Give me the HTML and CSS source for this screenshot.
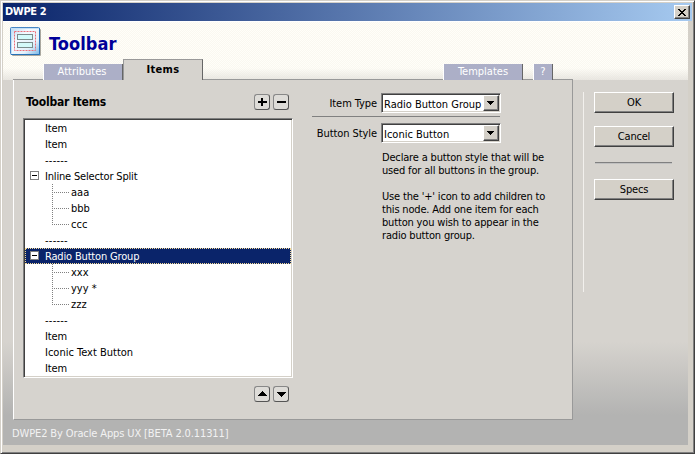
FILE: index.html
```html
<!DOCTYPE html>
<html lang="en">
<head>
<meta charset="utf-8">
<title>DWPE 2</title>
<link rel="stylesheet" href="styles.css">
</head>
<body>
<div class="window">
  <div class="titlebar"><span class="title">DWPE 2</span>
    <button class="close" aria-label="Close"><svg width="8" height="7" viewBox="0 0 8 7" shape-rendering="crispEdges"><path d="M0 0h2v1h1v1h2v-1h1v-1h2v1h-1v1h-1v1h-1v1h1v1h1v1h1v1h-2v-1h-1v-1h-2v1h-1v1h-2v-1h1v-1h1v-1h1v-1h-1v-1h-1v-1h-1z"/></svg></button>
  </div>
  <div class="content">
    <header class="header">
      <div class="brand">
        <svg class="logo" width="32" height="30" viewBox="0 0 32 30">
          <defs><linearGradient id="g" x1="0" y1="0" x2="1" y2="1"><stop offset="0" stop-color="#b8d8f0"/><stop offset=".35" stop-color="#f4faff"/><stop offset=".7" stop-color="#e4f1fb"/><stop offset="1" stop-color="#78b4e4"/></linearGradient></defs>
          <rect x="2" y="2" width="29" height="27" rx="1" fill="#aaa89f"/>
          <rect x=".5" y=".5" width="29" height="27" rx="1" fill="url(#g)" stroke="#4686c4"/>
          <path d="M1.5 27V1.5H29" fill="none" stroke="#c4e0f6"/>
          <path d="M29.5 1v26.500H1" fill="none" stroke="#2872b8"/>
          <rect x="4.500" y="4.500" width="21" height="19" fill="none" stroke="#ec6c76" stroke-dasharray="2 1"/>
          <rect x="7.500" y="7.500" width="15" height="5" fill="#d4fafa" stroke="#7c8c8c"/>
          <rect x="7.500" y="15.500" width="15" height="5" fill="#d4fafa" stroke="#7c8c8c"/>
        </svg>
        <h1>Toolbar</h1>
      </div>
      <nav class="tabs">
        <span class="tab attributes">Attributes</span>
        <span class="tab active">Items</span>
        <span class="tab templates">Templates</span>
        <span class="tab help">?</span>
      </nav>
    </header>
    <div class="main">
      <section class="panel">
        <div class="left">
          <div class="tree-head"><h2>Toolbar Items</h2>
            <div class="tools">
              <button class="tool" aria-label="Add"><svg width="16" height="16" shape-rendering="crispEdges"><path d="M4 7h9v2H4zM7 4h2v8H7z"/></svg></button>
              <button class="tool" aria-label="Remove"><svg width="16" height="16" shape-rendering="crispEdges"><path d="M4 7h9v2H4z"/></svg></button>
            </div>
          </div>
          <ul class="tree">
            <li>Item</li>
            <li>Item</li>
            <li class="dash">------</li>
            <li class="node"><i class="toggle"></i>Inline Selector Split</li>
            <li class="child">aaa</li>
            <li class="child">bbb</li>
            <li class="child last">ccc</li>
            <li class="dash">------</li>
            <li class="node selected"><i class="toggle"></i>Radio Button Group</li>
            <li class="child">xxx</li>
            <li class="child">yyy *</li>
            <li class="child last">zzz</li>
            <li class="dash">------</li>
            <li>Item</li>
            <li class="plain">Iconic Text Button</li>
            <li>Item</li>
          </ul>
          <div class="tools order">
            <button class="tool" aria-label="Move up"><svg width="16" height="16" shape-rendering="crispEdges"><path d="M8 5h1v1h1v1h1v1h1v1h1v1H4v-1h1v-1h1v-1h1v-1h1z"/></svg></button>
            <button class="tool" aria-label="Move down"><svg width="16" height="16" shape-rendering="crispEdges"><path d="M4 6h9v1h-1v1h-1v1h-1v1h-1v1H8v-1H7v-1H6v-1H5v-1H4z"/></svg></button>
          </div>
        </div>
        <div class="form">
          <div class="field"><label>Item Type</label><div class="select"><span>Radio Button Group</span><b class="drop"><svg width="7" height="4" shape-rendering="crispEdges"><path d="M0 0h7v1H6v1H5v1H4v1H3V3H2V2H1V1H0z"/></svg></b></div></div>
          <div class="rule"></div>
          <div class="field"><label>Button Style</label><div class="select"><span>Iconic Button</span><b class="drop"><svg width="7" height="4" shape-rendering="crispEdges"><path d="M0 0h7v1H6v1H5v1H4v1H3V3H2V2H1V1H0z"/></svg></b></div></div>
          <div class="help-text">
            <p>Declare a button style that will be<br>used for all buttons in the group.</p>
            <p>Use the '+' icon to add children to<br>this node. Add one item for each<br>button you wish to appear in the<br>radio button group.</p>
          </div>
        </div>
      </section>
      <aside class="actions">
        <button class="push">OK</button>
        <button class="push">Cancel</button>
        <div class="divider"></div>
        <button class="push">Specs</button>
      </aside>
    </div>
    <footer>DWPE2 By Oracle Apps UX [BETA 2.0.11311]</footer>
  </div>
</div>
</body>
</html>
```
FILE: styles.css
```css
* { box-sizing: border-box; margin: 0; padding: 0; }
body { font: 11px/16px "DejaVu Sans Condensed", "DejaVu Sans", sans-serif; font-stretch: condensed; color: #000; overflow: hidden; }
button { font: inherit; color: inherit; letter-spacing: inherit; }
svg { display: block; }
.window { width: 695px; height: 454px; background: #d4d0c8; border: 1px solid; border-color: #d4d0c8 #404040 #404040 #d4d0c8; box-shadow: inset 1px 1px #fff, inset -1px -1px #808080; padding: 2px; }
.titlebar { width: 689px; height: 18px; background: linear-gradient(90deg, #0a246a, #a6caf0); display: flex; align-items: center; justify-content: space-between; padding: 0 2px; }
.title { color: #fff; font-weight: bold; letter-spacing: -.35px; }
.close { width: 16px; height: 14px; background: #d4d0c8; border: 1px solid; border-color: #fff #404040 #404040 #fff; box-shadow: inset -1px -1px #808080; display: flex; align-items: center; justify-content: center; }
.content { width: 685px; height: 423px; background: linear-gradient(180deg, #d6d3ce 0 320px, #b3b3b2 393px); margin-top: 1px; }
.header { height: 58px; background: linear-gradient(180deg, transparent 46px, #d6d3ce88), repeating-conic-gradient(#fffef9 0 25%, #faf8f0 0 50%) 0 0 / 2px 2px; display: flex; flex-direction: column; justify-content: space-between; box-shadow: 0 -1px #fff; }
.brand { height: 37px; display: flex; padding: 5px 0 0 7px; }
h1 { font: bold 18px/34px "DejaVu Sans Condensed", sans-serif; color: #000099; margin-left: 7px; letter-spacing: .1px; }
.tabs { display: flex; align-items: flex-end; height: 21px; padding-left: 40px; background: linear-gradient(#999, #999) 10px 100% / 560px 1px no-repeat; }
.tab { height: 16px; line-height: 15px; color: #fff; text-align: center; background: #acafc7; border-left: 1px solid #fff; border-right: 1px solid #666; }
.attributes { width: 80px; padding-right: 2px; }
.tab.active { width: 80px; height: 21px; line-height: 19px; background: #d6d3ce; color: #000; font-weight: bold; letter-spacing: .3px; border: 1px solid #999; border-right-color: #666; border-bottom: 0; }
.templates { width: 80px; margin-left: 240px; }
.help { width: 20px; margin-left: 10px; }
.main { display: flex; height: 340px; padding-left: 10px; }
.panel { width: 560px; height: 340px; background: #d6d3ce; border: 1px solid #999; border-left-color: #fff; border-top: 0; display: flex; padding-left: 9px; }
.left { width: 270px; }
.tree-head { height: 38px; padding: 14px 4px 0 3px; display: flex; justify-content: space-between; }
h2 { font: bold 12px/16px "DejaVu Sans Condensed", sans-serif; letter-spacing: -.2px; }
.tools { display: flex; gap: 3px; }
.tool { width: 16px; height: 16px; border: 1px solid; border-color: #888 #555 #555 #888; border-radius: 3px; background: #dedcd8; }
.tool svg { margin: -1px; }
.order { margin: 8px 4px 0 0; justify-content: flex-end; }
.tree { list-style: none; width: 270px; height: 260px; background: #fff; border: 1px solid; border-color: #808080 #fff #fff #808080; box-shadow: inset 1px 1px #404040, inset -1px -1px #d4d0c8; padding: 1px; line-height: 18px; letter-spacing: -.17px; }
.tree li { height: 16px; padding-left: 20px; display: flex; white-space: pre; }
.tree li.plain { letter-spacing: 0; }
.tree li.dash { letter-spacing: .25px; }
.tree li.node { padding-left: 5px; }
.toggle { width: 9px; height: 9px; margin: 3px 6px 0 0; border: 1px solid #808080; background: linear-gradient(#000, #000) center / 5px 1px no-repeat #fff; }
.tree li.selected { background: #0a246a; color: #fff; outline: 1px dotted #f5db95; outline-offset: -1px; }
.tree li.child { padding-left: 27px; letter-spacing: 0; }
.child::before { content: ""; width: 17px; height: 16px; margin-right: 2px; background: repeating-linear-gradient(90deg, #808080 0 1px, transparent 1px 2px) 0 8px / 17px 1px no-repeat, repeating-linear-gradient(180deg, #808080 0 1px, transparent 1px 2px) 0 0 / 1px 16px no-repeat; }
.child.last::before { background-size: 17px 1px, 1px 9px; }
.form { width: 270px; padding: 13px 0 0 19px; letter-spacing: -.17px; }
.field { display: flex; justify-content: flex-end; height: 20px; width: 189px; }
.field label { line-height: 21px; margin-right: 4px; letter-spacing: -.08px; }
.select { width: 120px; height: 20px; display: flex; justify-content: space-between; background: #fff; border: 1px solid; border-color: #808080 #fff #fff #808080; box-shadow: inset 1px 1px #404040, inset -1px -1px #d4d0c8; padding: 1px; line-height: 19px; white-space: nowrap; letter-spacing: 0; }
.select span { padding-left: 1px; }
.drop { width: 16px; height: 16px; background: #d4d0c8; border: 1px solid; border-color: #fff #404040 #404040 #fff; box-shadow: inset -1px -1px #808080; padding: 5px 0 0 3px; }
.rule { height: 1px; background: #808080; margin: 3px 0 6px; width: 188px; }
.help-text { margin: 8px 0 0 70px; line-height: 13px; white-space: nowrap; }
.help-text p + p { margin-top: 13px; }
.actions { width: 92px; height: 200px; margin: 12px 0 0 10px; border-left: 1px solid #f2f0ed; padding-left: 10px; }
.push { display: block; width: 80px; height: 21px; line-height: 17px; background: #d4d0c8; border: 1px solid; border-color: #fff #404040 #404040 #fff; box-shadow: inset -1px -1px #808080; margin-bottom: 13px; letter-spacing: -.2px; }
.divider { width: 77px; height: 2px; margin: 15px 0 15px 1px; border-top: 1px solid #808080; border-bottom: 1px solid #c0c0c0; }
footer { height: 25px; line-height: 27px; padding-left: 9px; color: #f2f2f2; letter-spacing: -.12px; }
```
